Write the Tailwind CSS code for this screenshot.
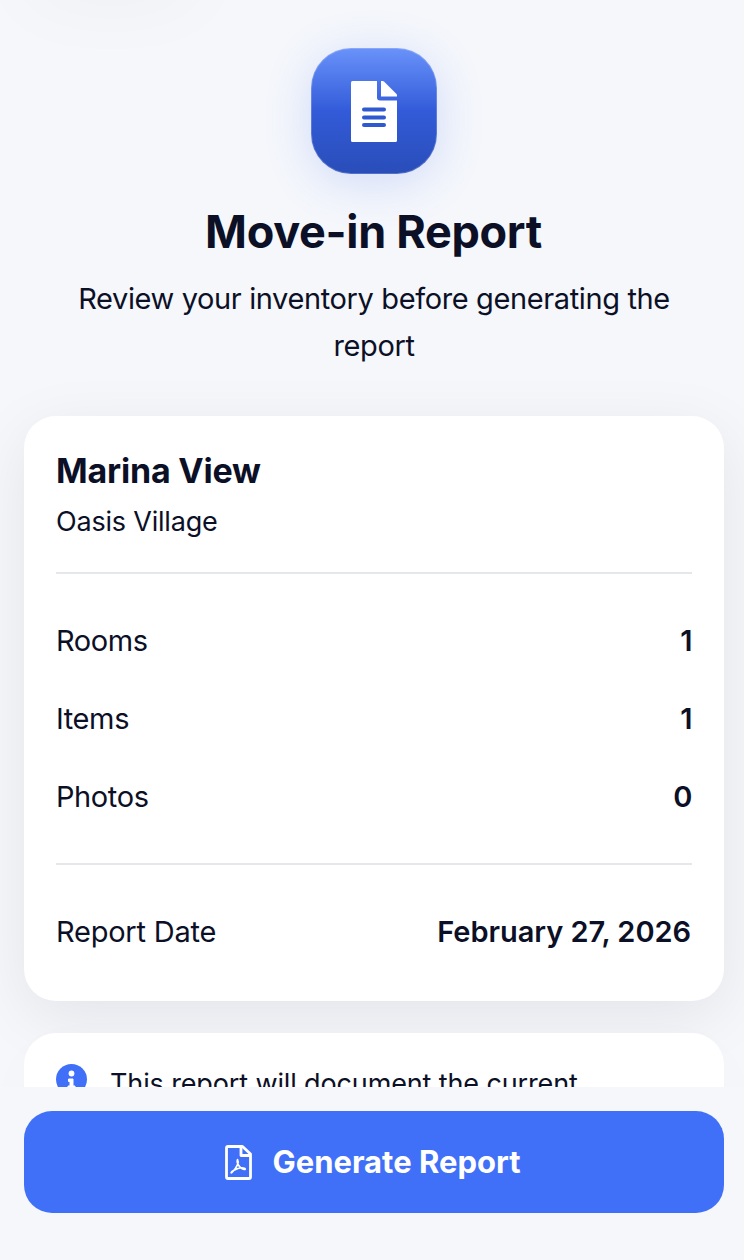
<!DOCTYPE html>
<html lang="en">
<head>
    <meta charset="UTF-8">
    <meta name="viewport" content="width=device-width, initial-scale=1.0">
    <title>Move-in Report</title>
    <script src="https://cdn.jsdelivr.net/npm/@tailwindcss/browser@4"></script>
</head>
<body class="bg-[#f5f7fb] text-[#0c1027] font-['Inter',sans-serif]">
    <div class="relative flex h-[1260px] w-[744px] flex-col overflow-hidden">
        <!-- Shadow of the header button above the fold -->
        <div class="absolute -top-20 left-6 h-16 w-44 rounded-full shadow-[0_16px_80px_rgba(12,16,39,0.04)]"></div>

        <!-- Scrolling content -->
        <main class="h-[1087px] overflow-hidden pt-12 pr-5 pl-6">
            <!-- Title -->
            <header class="flex flex-col items-center text-center">
                <div class="mr-px flex size-[126px] items-center justify-center rounded-[40px] border border-white/20 bg-linear-to-b from-[#6a92fa] via-[#335bd9] to-[#294db8] bg-origin-border shadow-[0_8px_48px_rgba(64,112,247,0.2)]">
                    <svg class="h-[61px] w-[46px]" viewBox="0 0 46 61">
                        <path d="M1.500 0H26V16.500Q26 19.500 29 19.500H46V59.500Q46 61 44.500 61H1.500Q0 61 0 59.500V1.500Q0 0 1.500 0Z" fill="white"/>
                        <path d="M30 0H31.500Q32.500 0 33 .5L45.500 13Q46 13.500 46 14.500V15.500H30Z" fill="white"/>
                        <path d="M13 28.500H33M13 36.500H33M13 44H33" stroke="#3059d1" stroke-width="4" stroke-linecap="round"/>
                    </svg>
                </div>
                <h1 class="mt-7 mr-px text-[45px] leading-[60px] font-bold tracking-[-0.3px]">Move-in Report</h1>
                <p class="mt-[13px] w-[620px] text-[29px] leading-[47px] tracking-[-0.38px]">Review your inventory before generating the report</p>
            </header>

            <!-- Summary card -->
            <section class="mt-[47px] h-[585px] rounded-[32px] bg-white px-8 pt-8 shadow-[0_16px_64px_rgba(20,16,30,0.08)]">
                <h2 class="text-[34px] leading-[46px] font-bold tracking-[-0.2px]">Marina View</h2>
                <p class="mt-2 text-[27px] leading-10 tracking-[-0.2px]">Oasis Village</p>
                <div class="mt-[30px] border-y-2 border-[#e6e7ec] pt-[28px] pb-[27px] text-[29px] tracking-[-0.4px]">
                    <div class="flex h-[78px] items-center justify-between"><span>Rooms</span><span class="font-semibold">1</span></div>
                    <div class="flex h-[78px] items-center justify-between"><span>Items</span><span class="font-semibold">1</span></div>
                    <div class="flex h-[78px] items-center justify-between"><span>Photos</span><span class="font-semibold">0</span></div>
                </div>
                <div class="mt-[28px] flex h-[78px] items-center justify-between text-[29px]"><span class="tracking-[-0.23px]">Report Date</span><span class="pr-px font-semibold tracking-[-0.05px]">February 27, 2026</span></div>
            </section>

            <!-- Note -->
            <section class="relative mt-8 flex h-40 gap-[23px] rounded-[32px] bg-white px-8 pt-[31px] shadow-[0_16px_64px_rgba(12,16,39,0.02)]">
                <svg class="size-[31px]" viewBox="0 0 31 31">
                    <circle cx="15.500" cy="15.500" r="15.500" fill="#4070f7"/>
                    <circle cx="15.500" cy="9.500" r="2.900" fill="white"/>
                    <path d="M12.500 15H17V22H19V25H12V22H14V17.500H12.500Z" fill="white" stroke="white" stroke-linejoin="round"/>
                </svg>
                <p class="text-[27px] leading-10 tracking-[-0.13px]">This report will document the current</p>
            </section>
        </main>

        <!-- Bottom action -->
        <footer class="relative flex-1 bg-[#f5f7fb] pt-6 pr-5 pl-6">
            <button class="flex h-[102px] w-full items-center justify-center gap-5 rounded-[28px] bg-[#4070f7] pt-px pr-0.5 text-[31px] font-bold text-white">
                <svg class="h-[35px] w-[27px]" viewBox="0 0 27 35" fill="none" stroke="white" stroke-width="2.800" stroke-linejoin="round">
                    <path d="M3 1.500H17.500L25.500 9V32Q25.500 33.500 24 33.500H3Q1.500 33.500 1.500 32V3Q1.500 1.500 3 1.500Z"/>
                    <path d="M16 2V10.500H25"/>
                    <path d="M12.500 14.500C14 17 12.500 22 7 27.500C5.500 29 6 26.500 8.500 25.500C12 23.500 17 22 20 23.500C21.500 25 17.500 25 15.500 22.500C13 20 11.500 16.500 12.500 14.500Z" stroke-width="1.600"/>
                </svg>
                Generate Report
            </button>
        </footer>
    </div>
</body>
</html>
